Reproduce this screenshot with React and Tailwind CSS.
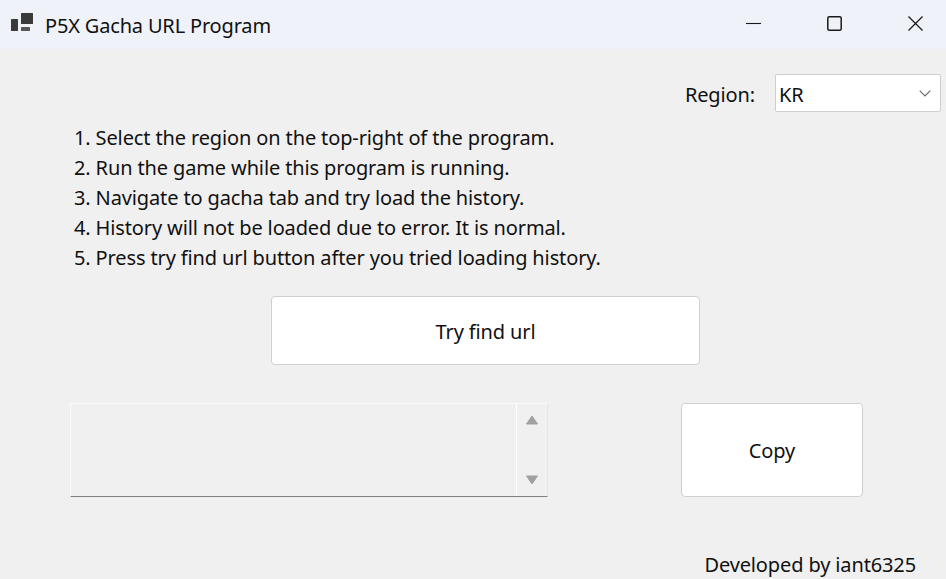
const steps = [
  "1. Select the region on the top-right of the program.",
  "2. Run the game while this program is running.",
  "3. Navigate to gacha tab and try load the history.",
  "4. History will not be loaded due to error. It is normal.",
  "5. Press try find url button after you tried loading history.",
];

const AppIcon = () => (
  <svg width="22" height="20" viewBox="0 0 22 20" className="mb-[5px] text-[#3a3a3a]">
    <rect x="10" y="1" width="12" height="11" rx="0.5" fill="currentColor" />
    <rect x="0" y="7" width="7" height="12" rx="0.5" fill="currentColor" />
    <rect x="10" y="15" width="9" height="4" rx="0.5" fill="currentColor" opacity="0.85" />
  </svg>
);

const TitleBar = () => (
  <div className="flex h-[49px] shrink-0 items-center bg-[#eff3f9] pl-[11px]">
    <AppIcon />
    <span className="ml-[12px] translate-y-[1px] text-[20px] tracking-[-0.17px] text-[#111]">P5X Gacha URL Program</span>
    <div className="ml-auto mb-[2px] flex items-center gap-[66px] pr-[23px] text-[#1a1a1a]">
      <svg width="15" height="15" viewBox="0 0 15 15">
        <path d="M0 7.5 H15" stroke="currentColor" strokeWidth="1.1" fill="none" />
      </svg>
      <svg width="15" height="15" viewBox="0 0 15 15">
        <rect x="0.8" y="0.8" width="13.4" height="13.4" rx="1.5" stroke="currentColor" strokeWidth="1.5" fill="none" />
      </svg>
      <svg width="15" height="15" viewBox="0 0 15 15">
        <path d="M0.5 0.5 L14.5 14.5 M14.5 0.5 L0.5 14.5" stroke="currentColor" strokeWidth="1.3" fill="none" />
      </svg>
    </div>
  </div>
);

const Button = ({ className, children }) => (
  <button className={`flex shrink-0 items-center justify-center rounded-[4px] border border-[#d0d0d0] bg-white text-[#111] ${className}`}>
    <span className="translate-y-[1px]">{children}</span>
  </button>
);

export default function App() {
  return (
    <div className="flex h-[579px] w-[946px] flex-col overflow-hidden bg-[#f0f0f0] font-['Noto_Sans','Open_Sans',sans-serif] text-[20px] tracking-[-0.13px] text-[#111]">
      <TitleBar />

      <div className="mt-[25px] flex h-[38px] shrink-0 items-center justify-end pr-[5px]">
        <span className="translate-y-[2px]">Region:</span>
        <div className="ml-[20px] flex h-[38px] w-[166px] items-center justify-between rounded-[2px] border border-[#cfcfcf] bg-white pl-[3px] pr-[9px]">
          <span className="translate-y-[2px]">KR</span>
          <svg width="12" height="7" viewBox="0 0 12 7" className="text-[#666]">
            <path d="M0.7 0.7 L6 6 L11.3 0.7" stroke="currentColor" strokeWidth="1.1" fill="none" />
          </svg>
        </div>
      </div>

      <ol className="mt-[11px] ml-[74px] shrink-0">
        {steps.map((step) => (
          <li key={step} className="h-[30px] leading-[30px]">
            {step}
          </li>
        ))}
      </ol>

      <Button className="mt-[23px] ml-[271px] h-[69px] w-[429px]">Try find url</Button>

      <div className="mt-[38px] ml-[70px] flex shrink-0 items-start">
        <div className="flex h-[94px] w-[478px] border border-[#fbfbfb] border-r-[#e6e6e6] border-b-[#808080]">
          <div className="flex-1 border-r border-white" />
          <div className="flex w-[30px] flex-col items-center justify-between py-[11px]">
            <svg width="12" height="10" viewBox="0 0 12 10"><path d="M6 1 L11.5 9 H0.5 Z" fill="#a0a0a0" stroke="#a0a0a0" strokeLinejoin="round" /></svg>
            <svg width="12" height="10" viewBox="0 0 12 10"><path d="M0.5 1 H11.5 L6 9 Z" fill="#a0a0a0" stroke="#a0a0a0" strokeLinejoin="round" /></svg>
          </div>
        </div>
        <Button className="ml-[133px] h-[94px] w-[182px]">Copy</Button>
      </div>

      <div className="mt-[53px] shrink-0 pr-[30px] text-right">Developed by iant6325</div>
    </div>
  );
}
